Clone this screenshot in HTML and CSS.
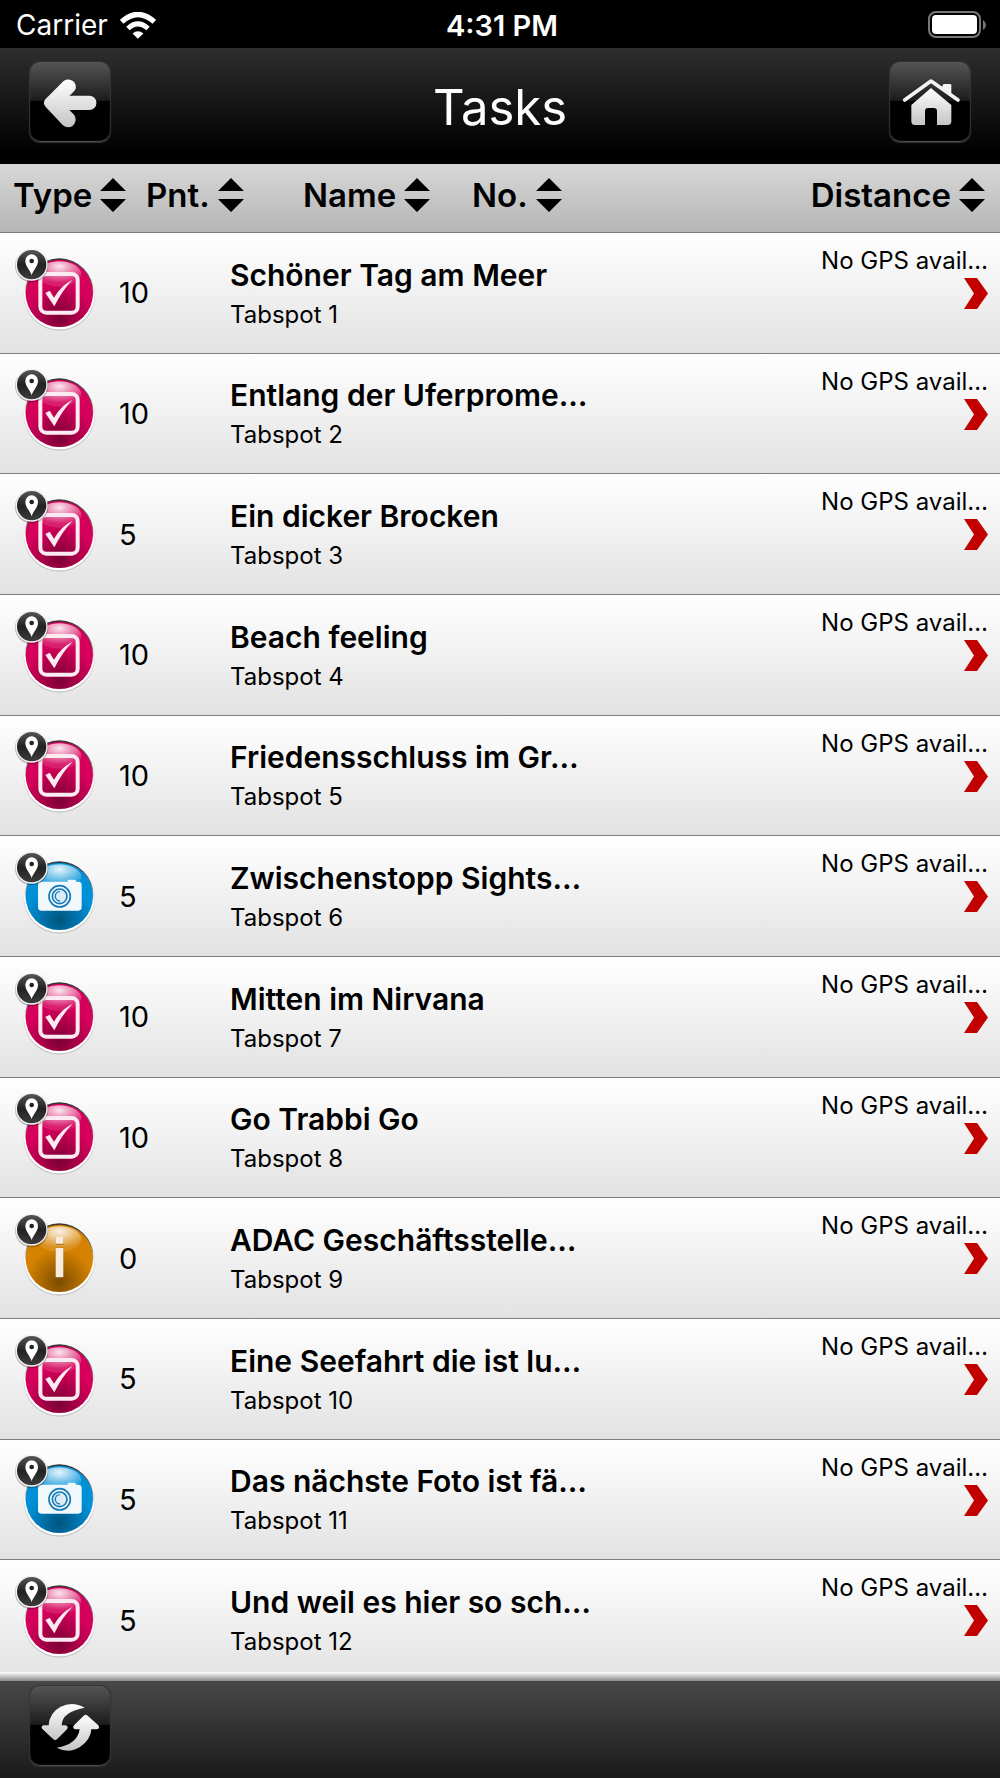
FILE: index.html
```html
<!DOCTYPE html>
<html lang="en">
<head>
    <meta charset="UTF-8">
    <meta name="viewport" content="width=device-width, initial-scale=1.0">
    <title>Tasks</title>
    <link rel="stylesheet" href="styles.css">
</head>
<body>
    <!-- shared icons -->
    <svg class="sprite" aria-hidden="true">
        <defs>
            <linearGradient id="metal" x1="0" y1="0" x2="0" y2="1">
                <stop offset="0" stop-color="#fff"/>
                <stop offset="1" stop-color="#c4c4c4"/>
            </linearGradient>
            <radialGradient id="gloss" cx="0.5" cy="0.2" r="0.65">
                <stop offset="0" stop-color="#fff" stop-opacity="0.9"/>
                <stop offset="1" stop-color="#fff" stop-opacity="0.12"/>
            </radialGradient>
            <radialGradient id="shade" cx="0.5" cy="0.85" r="0.5">
                <stop offset="0" stop-color="#000" stop-opacity="0.42"/>
                <stop offset="1" stop-color="#000" stop-opacity="0"/>
            </radialGradient>
            <linearGradient id="rim" x1="0" y1="0" x2="0" y2="1">
                <stop offset="0" stop-color="#333"/>
                <stop offset="0.35" stop-color="#777"/>
                <stop offset="0.6" stop-color="#fff"/>
                <stop offset="1" stop-color="#fff"/>
            </linearGradient>
            <linearGradient id="pin-bg" x1="0" y1="0" x2="0" y2="1">
                <stop offset="0" stop-color="#555"/>
                <stop offset="0.5" stop-color="#222"/>
                <stop offset="1" stop-color="#3c3c3c"/>
            </linearGradient>
        </defs>
        <symbol id="pin" viewBox="40 70 252 270">
            <circle cx="96" cy="123" r="50" fill="#000" opacity="0.25"/>
            <circle cx="96" cy="120" r="48" fill="#f4f4f4"/>
            <circle cx="96" cy="120" r="44" fill="url(#pin-bg)"/>
            <path d="M96 152 C93 137 77 127 77 108 A19 19 0 0 1 115 108 C115 127 99 137 96 152 Z" fill="#fff"/>
            <circle cx="96" cy="109" r="7" fill="#222"/>
        </symbol>
        <symbol id="ball" viewBox="40 70 252 270">
            <circle cx="179" cy="211" r="107" fill="#000" opacity="0.14"/>
            <circle cx="179" cy="208" r="106" fill="#fff"/>
            <circle cx="179" cy="204" r="103" fill="url(#rim)"/>
            <circle cx="179" cy="206" r="101" fill="currentColor"/>
            <circle cx="179" cy="206" r="101" fill="url(#shade)"/>
            <ellipse cx="179" cy="148" rx="66" ry="38" fill="url(#gloss)"/>
        </symbol>
        <symbol id="check" viewBox="40 70 252 270">
            <rect x="122" y="148" width="112" height="116" rx="18" fill="none" stroke="#fbeaf2" stroke-width="12"/>
            <path d="M137 205 L150 198 L163 219 Q184 182 219 165 Q188 196 164 245 Z" fill="#fbeaf2"/>
        </symbol>
        <symbol id="camera" viewBox="40 70 252 270">
            <path d="M125 162 H204 V159 Q204 156 208 156 H225 Q229 156 229 162 H236 Q246 162 246 172 V239 Q246 249 236 249 H125 Q115 249 115 239 V172 Q115 162 125 162 Z" fill="#f1f8fc"/>
            <circle cx="180" cy="206" r="32" fill="none" stroke="#1479b4" stroke-width="5"/>
            <circle cx="180" cy="206" r="22" fill="#dbeef8" stroke="#1479b4" stroke-width="5"/>
            <path d="M181 192 A14 14 0 0 0 181 220" fill="none" stroke="#1479b4" stroke-width="4"/>
        </symbol>
        <symbol id="info" viewBox="40 70 252 270">
            <path d="M168 144 H191 V165 H168 Z M168 174 H191 V266 H168 Z" fill="#7a4a00" opacity="0.6"/>
            <path d="M168 142 H191 V162 H168 Z M168 175 H191 V263 H168 Z" fill="#f8eddd"/>
        </symbol>
        <symbol id="sort" viewBox="0 0 26 34">
            <path d="M13 0 L26 13 H0 Z M0 21 H26 L13 34 Z"/>
        </symbol>
        <symbol id="chevron" viewBox="0 0 24 31">
            <path d="M0 0 H13 L24 15.500 L13 31 H0 L10 15.500 Z" fill="#c20000"/>
        </symbol>
    </svg>

    <div class="status">
        <div class="carrier">
            Carrier
            <svg width="36" height="27" viewBox="0 0 109 80" fill="none" stroke="#fff">
                <path d="M5 29 Q54 -16 104 29" stroke-width="16"/>
                <path d="M24 49 Q54 21 85 49" stroke-width="15"/>
                <path d="M54 80 L38 64 Q54 51 71 64 Z" fill="#fff" stroke="none"/>
            </svg>
        </div>
        <div class="clock">4:31 PM</div>
        <svg class="battery" width="60" height="28" viewBox="0 0 60 28">
            <rect x="1" y="1" width="51" height="25" rx="7" fill="none" stroke="#777" stroke-width="2"/>
            <rect x="4" y="4" width="45" height="19" rx="4" fill="#fff"/>
            <path d="M55 9 Q58 11 58 14 Q58 17 55 19 Z" fill="#777"/>
        </svg>
    </div>

    <header class="navbar">
        <button class="tool" aria-label="Back">
            <svg viewBox="0 0 240 240">
                <path d="M46 112 L100 58 C116 44 142 58 137 80 Q135 86 118 101 H178 A21 21 0 0 1 178 144 H118 L132 158 C144 174 132 196 115 196 Q106 196 98 189 L48 136 Q36 124 46 112 Z" fill="url(#metal)"/>
            </svg>
        </button>
        <h1>Tasks</h1>
        <button class="tool" aria-label="Home">
            <svg viewBox="0 0 240 240">
                <path d="M64 129 L123 78 L184 129 V178 Q184 189 173 189 H141 V148 Q141 138 131 138 H115 Q105 138 105 148 V189 H74 Q64 189 64 178 Z" fill="url(#metal)"/>
                <path d="M160 66 H180 Q184 66 184 70 V98 L156 75 Z" fill="#f4f4f4"/>
                <path d="M44 114 L123 57 L204 114" fill="none" stroke="#f2f2f2" stroke-width="11" stroke-linecap="round" stroke-linejoin="round"/>
            </svg>
        </button>
    </header>

    <div class="sortbar">
        <button>Type <svg><use href="#sort"/></svg></button>
        <button>Pnt. <svg><use href="#sort"/></svg></button>
        <button>Name <svg><use href="#sort"/></svg></button>
        <button>No. <svg><use href="#sort"/></svg></button>
        <button>Distance <svg><use href="#sort"/></svg></button>
    </div>

    <main class="tasks">
        <a class="task" href="#1">
            <svg class="icon quiz"><use href="#ball"/><use href="#check"/><use href="#pin"/></svg>
            <span class="points">10</span>
            <span class="info"><b>Schöner Tag am Meer</b><small>Tabspot 1</small></span>
            <span class="distance">No GPS avail…</span>
            <svg class="arrow"><use href="#chevron"/></svg>
        </a>
        <a class="task" href="#2">
            <svg class="icon quiz"><use href="#ball"/><use href="#check"/><use href="#pin"/></svg>
            <span class="points">10</span>
            <span class="info"><b>Entlang der Uferprome…</b><small>Tabspot 2</small></span>
            <span class="distance">No GPS avail…</span>
            <svg class="arrow"><use href="#chevron"/></svg>
        </a>
        <a class="task" href="#3">
            <svg class="icon quiz"><use href="#ball"/><use href="#check"/><use href="#pin"/></svg>
            <span class="points">5</span>
            <span class="info"><b>Ein dicker Brocken</b><small>Tabspot 3</small></span>
            <span class="distance">No GPS avail…</span>
            <svg class="arrow"><use href="#chevron"/></svg>
        </a>
        <a class="task" href="#4">
            <svg class="icon quiz"><use href="#ball"/><use href="#check"/><use href="#pin"/></svg>
            <span class="points">10</span>
            <span class="info"><b>Beach feeling</b><small>Tabspot 4</small></span>
            <span class="distance">No GPS avail…</span>
            <svg class="arrow"><use href="#chevron"/></svg>
        </a>
        <a class="task" href="#5">
            <svg class="icon quiz"><use href="#ball"/><use href="#check"/><use href="#pin"/></svg>
            <span class="points">10</span>
            <span class="info"><b>Friedensschluss im Gr…</b><small>Tabspot 5</small></span>
            <span class="distance">No GPS avail…</span>
            <svg class="arrow"><use href="#chevron"/></svg>
        </a>
        <a class="task" href="#6">
            <svg class="icon photo"><use href="#ball"/><use href="#camera"/><use href="#pin"/></svg>
            <span class="points">5</span>
            <span class="info"><b>Zwischenstopp Sights…</b><small>Tabspot 6</small></span>
            <span class="distance">No GPS avail…</span>
            <svg class="arrow"><use href="#chevron"/></svg>
        </a>
        <a class="task" href="#7">
            <svg class="icon quiz"><use href="#ball"/><use href="#check"/><use href="#pin"/></svg>
            <span class="points">10</span>
            <span class="info"><b>Mitten im Nirvana</b><small>Tabspot 7</small></span>
            <span class="distance">No GPS avail…</span>
            <svg class="arrow"><use href="#chevron"/></svg>
        </a>
        <a class="task" href="#8">
            <svg class="icon quiz"><use href="#ball"/><use href="#check"/><use href="#pin"/></svg>
            <span class="points">10</span>
            <span class="info"><b>Go Trabbi Go</b><small>Tabspot 8</small></span>
            <span class="distance">No GPS avail…</span>
            <svg class="arrow"><use href="#chevron"/></svg>
        </a>
        <a class="task" href="#9">
            <svg class="icon place"><use href="#ball"/><use href="#info"/><use href="#pin"/></svg>
            <span class="points">0</span>
            <span class="info"><b>ADAC Geschäftsstelle…</b><small>Tabspot 9</small></span>
            <span class="distance">No GPS avail…</span>
            <svg class="arrow"><use href="#chevron"/></svg>
        </a>
        <a class="task" href="#10">
            <svg class="icon quiz"><use href="#ball"/><use href="#check"/><use href="#pin"/></svg>
            <span class="points">5</span>
            <span class="info"><b>Eine Seefahrt die ist lu…</b><small>Tabspot 10</small></span>
            <span class="distance">No GPS avail…</span>
            <svg class="arrow"><use href="#chevron"/></svg>
        </a>
        <a class="task" href="#11">
            <svg class="icon photo"><use href="#ball"/><use href="#camera"/><use href="#pin"/></svg>
            <span class="points">5</span>
            <span class="info"><b>Das nächste Foto ist fä…</b><small>Tabspot 11</small></span>
            <span class="distance">No GPS avail…</span>
            <svg class="arrow"><use href="#chevron"/></svg>
        </a>
        <a class="task" href="#12">
            <svg class="icon quiz"><use href="#ball"/><use href="#check"/><use href="#pin"/></svg>
            <span class="points">5</span>
            <span class="info"><b>Und weil es hier so sch…</b><small>Tabspot 12</small></span>
            <span class="distance">No GPS avail…</span>
            <svg class="arrow"><use href="#chevron"/></svg>
        </a>
    </main>

    <footer class="toolbar">
        <button class="tool" aria-label="Refresh">
            <svg viewBox="0 0 240 240">
                <path d="M164 65 Q128 44 92 62 Q58 80 56 118 H41 Q31 121 37 129 L70 160 Q76 165 81 160 L111 130 Q117 121 107 118 H95 Q95 78 164 65 Z" fill="url(#metal)"/>
                <path d="M80 185 Q116 204 150 183 Q182 162 184 130 H201 Q211 127 205 118 L173 89 Q167 84 161 89 L132 118 Q126 127 136 130 H149 Q142 176 80 185 Z" fill="url(#metal)"/>
            </svg>
        </button>
    </footer>
</body>
</html>
```
FILE: styles.css
```css
* {
    box-sizing: border-box;
}
body {
    display: flex;
    flex-direction: column;
    min-height: 100vh;
    margin: 0;
    font-family: Inter, "Liberation Sans", sans-serif;
    background-color: #000;
    color: #000;
}
button {
    padding: 0;
    border: none;
    background: none;
    font-family: inherit;
    color: inherit;
    cursor: pointer;
}
.sprite {
    position: absolute;
    width: 0;
    height: 0;
}

/* status bar */
.status {
    display: grid;
    grid-template-columns: 1fr auto 1fr;
    align-items: center;
    height: 48px;
    padding: 2px 12px 0 16px;
    font-size: 28px;
    color: #fff;
}
.carrier {
    display: flex;
    align-items: center;
    gap: 12px;
}
.clock {
    font-size: 29px;
    font-weight: 600;
}
.battery {
    justify-self: end;
}

/* title bar */
.navbar {
    display: grid;
    grid-template-columns: 80px 1fr 80px;
    padding: 14px 30px 22px;
    background: linear-gradient(#2e2e2e, #000 90%);
}
.navbar h1 {
    margin: 0;
    font-size: 49px;
    font-weight: 400;
    line-height: 92px;
    height: 80px;
    text-align: center;
    color: #fff;
}
.tool {
    width: 80px;
    height: 80px;
    border-radius: 10px;
    background: linear-gradient(#555, #1c1c1c 48%, #000 49%);
    box-shadow: inset 0 -1px 1px #555, 0 0 1px 1px #333;
}
.tool svg {
    display: block;
    width: 100%;
    height: 100%;
}

/* sort buttons */
.sortbar {
    display: grid;
    grid-template-columns: 133px 157px 169px 1fr auto;
    height: 69px;
    padding: 0 15px 7px 13px;
    background: linear-gradient(#d8d8d8, #b6b6b6);
    border-bottom: 1px solid #7d7d7d;
}
.sortbar button {
    display: flex;
    align-items: center;
    gap: 8px;
    font-size: 33px;
    font-weight: 600;
}
.sortbar svg {
    width: 26px;
    height: 34px;
}

/* task list */
.tasks {
    flex: 1;
    display: grid;
    grid-auto-rows: 1fr;
}
.task {
    display: grid;
    grid-template-columns: 106px 111px 1fr auto;
    grid-template-rows: 45px 1fr;
    align-items: center;
    min-height: 100px;
    padding: 0 12px 0 13px;
    background: linear-gradient(#fff, #e2e2e2);
    border-bottom: 1px solid #7d7d7d;
    color: #000;
    text-decoration: none;
}
.icon {
    grid-row: 1 / 3;
    width: 84px;
    height: 90px;
}
.quiz {
    color: #d4005a;
}
.photo {
    color: #0090d8;
}
.place {
    color: #d58200;
}
.points {
    grid-row: 1 / 3;
    font-size: 29px;
}
.info {
    grid-row: 1 / 3;
    min-width: 0;
    padding-top: 4px;
}
.info b,
.info small {
    display: block;
    line-height: 39px;
}
.info b {
    font-size: 30px;
    font-weight: 600;
}
.info small {
    font-size: 24px;
}
.distance {
    grid-column: 4;
    align-self: end;
    font-size: 24px;
    line-height: 34px;
}
.arrow {
    grid-column: 4;
    justify-self: end;
    align-self: start;
    width: 24px;
    height: 31px;
}

/* bottom toolbar */
.toolbar {
    display: flex;
    position: relative;
    padding: 5px 30px 12px;
    background: linear-gradient(#484848, #1a1a1a);
}
.toolbar::before {
    content: "";
    position: absolute;
    left: 0;
    right: 0;
    bottom: 100%;
    height: 9px;
    background: linear-gradient(#fff, #8a8a8a);
}
```
